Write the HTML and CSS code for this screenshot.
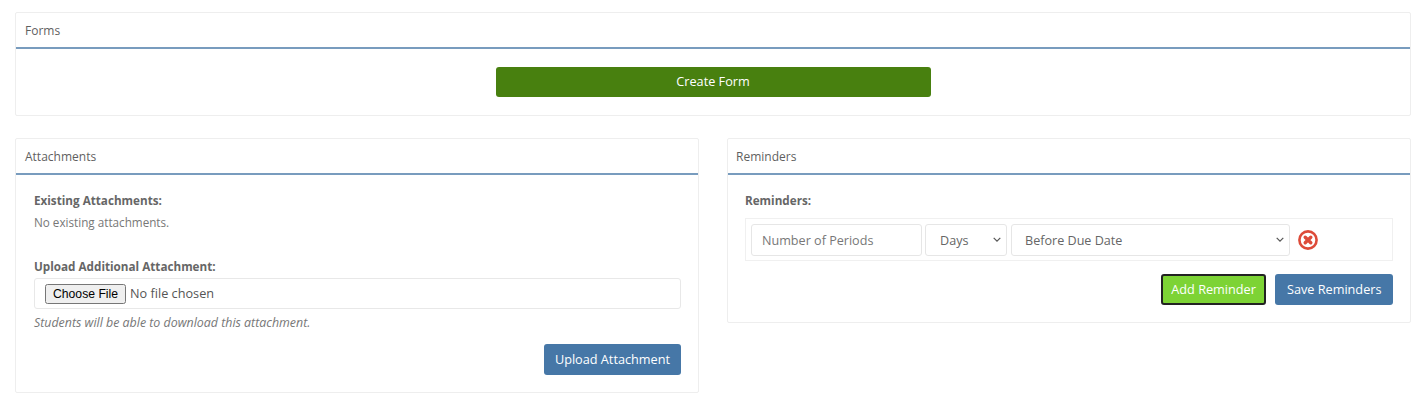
FILE: index.html
```html
<!DOCTYPE html>
<html lang="en">
<head>
<meta charset="utf-8">
<title>Assignment settings</title>
<link rel="stylesheet" href="styles.css">
</head>
<body>
<section class="card card-forms">
  <div class="card-head">Forms</div>
  <div class="forms-body">
    <button class="btn btn-create" type="button">Create Form</button>
  </div>
</section>
<div class="columns">
  <section class="card">
    <div class="card-head">Attachments</div>
    <div class="card-body">
      <div class="label">Existing Attachments:</div>
      <p class="none">No existing attachments.</p>
      <label class="label label-upload" for="file">Upload Additional Attachment:</label>
      <div class="file-box"><input id="file" class="file" type="file"></div>
      <p class="hint">Students will be able to download this attachment.</p>
      <div class="actions actions-upload">
        <button class="btn btn-blue btn-upload" type="button">Upload Attachment</button>
      </div>
    </div>
  </section>
  <section class="card card-reminders">
    <div class="card-head">Reminders</div>
    <div class="card-body">
      <div class="label">Reminders:</div>
      <div class="reminder-row">
        <input class="field num" type="text" placeholder="Number of Periods">
        <select class="field sel days"><option>Days</option></select>
        <select class="field sel when"><option>Before Due Date</option></select>
        <svg class="remove" viewBox="0 0 20 20" width="20" height="20" aria-label="Remove">
          <circle cx="10" cy="10" r="8.6" fill="#fff" stroke="#dd4b39" stroke-width="2.6"/>
          <path d="M7.2 7.2 12.8 12.8M12.8 7.2 7.2 12.8" stroke="#dd4b39" stroke-width="3.4" stroke-linecap="round"/>
        </svg>
      </div>
      <div class="actions actions-rem">
        <button class="btn btn-green" type="button">Add Reminder</button>
        <button class="btn btn-blue" type="button">Save Reminders</button>
      </div>
    </div>
  </section>
</div>
</body>
</html>
```
FILE: styles.css
```css
* { box-sizing: border-box; }
html, body { margin: 0; background: #fff; }
body {
  padding: 12px 9px 0 15px;
  font-family: "Open Sans", "Noto Sans", sans-serif;
  font-size: 13px;
  line-height: 18px;
  color: #666;
}
.card {
  border: 1px solid #eee;
  border-radius: 2px;
  background: #fff;
}
.card-head {
  height: 36px;
  padding: 9px 9px 0;
  border-bottom: 2px solid #789cbe;
  color: #5f5f5f;
  font-size: 12px;
}
.card-reminders .card-head { padding-left: 8px; }
.forms-body {
  display: flex;
  justify-content: center;
  height: 66px;
  padding-top: 18px;
}
.columns {
  display: grid;
  grid-template-columns: 684px 684px;
  column-gap: 28px;
  align-items: start;
  margin-top: 22px;
}
.card-body { padding: 16px 17px 17px 18px; }
.card-reminders .card-body { padding-left: 17px; }
.label { display: block; font-weight: 700; font-size: 11.7px; color: #666; }
.none { margin: 4px 0 0; font-size: 11.7px; color: #777; }
.label-upload { margin-top: 26px; }
.file-box {
  height: 31px;
  margin-top: 3px;
  padding: 5px 10px;
  border: 1px solid #e8e8e8;
  border-radius: 3px;
}
.file {
  font-family: "Open Sans", sans-serif;
  font-size: 12.7px;
  color: #555;
}
.file::file-selector-button {
  height: 20px;
  font-family: "Liberation Sans", Arial, sans-serif;
  font-size: 12.2px;
  margin-right: 4px;
}
.hint { margin: 5px 0 0; font-size: 12.4px; font-style: italic; color: #777; }
.actions { display: flex; justify-content: flex-end; gap: 9px; }
.actions-upload { margin-top: 12px; }
.actions-rem { margin-top: 13px; }
.btn {
  height: 31px;
  padding: 0 10.5px 2px;
  border: 1px solid transparent;
  border-radius: 3px;
  color: #fff;
  font-family: inherit;
  font-size: 12.7px;
  cursor: pointer;
}
.btn-upload { padding: 0 10px 2px; }
.btn-create { width: 435px; height: 30px; background: #48800f; }
.btn-blue { background: #4677a7; }
.btn-green { background: #7dd335; border: 2px solid #222; padding: 0 8.5px 2px; }
.reminder-row {
  display: flex;
  align-items: center;
  gap: 3px;
  height: 43px;
  margin-top: 9px;
  padding: 0 5px;
  border: 1px solid #f0f0f0;
}
.field {
  height: 32px;
  padding-top: 1px;
  border: 1px solid #e6e6e6;
  border-radius: 3px;
  background-color: #fff;
  font-family: inherit;
  font-size: 12.6px;
  color: #666;
}
.field::placeholder { color: #777; opacity: 1; }
.num { width: 171px; padding: 2px 10px 0; }
.sel {
  appearance: none;
  padding-left: 14px;
  padding-right: 16px;
  background-image: url("data:image/svg+xml,%3Csvg xmlns='http://www.w3.org/2000/svg' viewBox='0 0 8 5'%3E%3Cpath d='M.7.8 4 4.1 7.3.8' fill='none' stroke='%23555' stroke-width='1.2'/%3E%3C/svg%3E");
  background-repeat: no-repeat;
  background-position: right 5px center;
  background-size: 8px 5px;
}
.days { width: 82px; }
.when { width: 279px; margin-left: 1px; padding-left: 13px; }
.remove { margin-left: 5px; }
```
